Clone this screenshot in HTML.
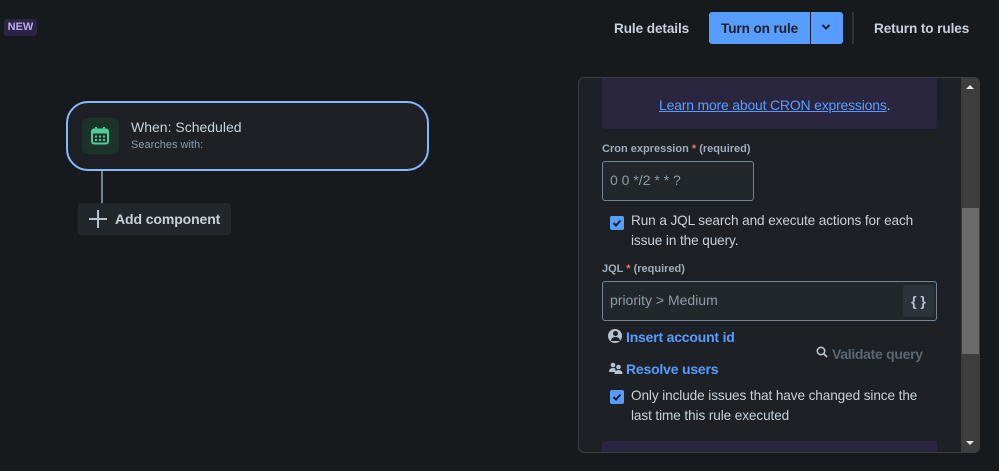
<!DOCTYPE html>
<html><head><style>
*{box-sizing:border-box;margin:0;padding:0}
body{width:999px;height:471px;background:#161a1d;font-family:"Liberation Sans",sans-serif;color:#b6c2cf;position:relative;overflow:hidden;font-size:14px}
.abs{position:absolute}
</style></head><body>
<div class="abs" style="left:4px;top:19px;width:33px;height:17px;background:#2b2442;border-radius:3px;color:#b8acf6;font-weight:bold;font-size:11px;text-align:center;line-height:17px">NEW</div>

<div class="abs" style="left:614px;top:20px;font-size:13.6px;font-weight:bold;color:#c7d1db;line-height:18px;letter-spacing:-0.1px">Rule details</div>
<div class="abs" style="left:709px;top:12px;width:134px;height:32px;background:#579dff;border-radius:3px"></div>
<div class="abs" style="left:810px;top:12px;width:1px;height:32px;background:#1d2125"></div>
<div class="abs" style="left:721px;top:20px;font-size:13.6px;font-weight:bold;color:#1d2125;line-height:18px;letter-spacing:-0.1px">Turn on rule</div>
<svg class="abs" style="left:821px;top:23px" width="10" height="8"><path d="M1.5 2 L5 5.5 L8.5 2" stroke="#1d2125" stroke-width="2" fill="none"/></svg>
<div class="abs" style="left:852px;top:12px;width:2px;height:32px;background:#2c333a"></div>
<div class="abs" style="left:874px;top:20px;font-size:13.6px;font-weight:bold;color:#c7d1db;line-height:18px;letter-spacing:-0.1px">Return to rules</div>

<div class="abs" style="left:66px;top:101px;width:363px;height:70px;border:2px solid #85b8ff;border-radius:22px;background:#1d2125"></div>
<div class="abs" style="left:82px;top:118px;width:37px;height:36px;background:#1c3329;border-radius:6px"></div>
<svg class="abs" style="left:90px;top:126px" width="20" height="20" viewBox="0 0 20 20"><rect x="2" y="3.5" width="16" height="14" rx="2" fill="none" stroke="#4bce97" stroke-width="2"/><rect x="2" y="3.5" width="16" height="4" fill="#4bce97"/><rect x="5" y="1" width="2" height="4" fill="#4bce97"/><rect x="13" y="1" width="2" height="4" fill="#4bce97"/><g fill="#4bce97"><rect x="5" y="9.5" width="2" height="2"/><rect x="9" y="9.5" width="2" height="2"/><rect x="13" y="9.5" width="2" height="2"/><rect x="5" y="13" width="2" height="2"/><rect x="9" y="13" width="2" height="2"/><rect x="13" y="13" width="2" height="2"/></g></svg>
<div class="abs" style="left:131px;top:119px;font-size:14px;color:#c7d1db">When: Scheduled</div>
<div class="abs" style="left:131px;top:139px;font-size:11px;color:#8c9bab">Searches with:</div>
<div class="abs" style="left:101px;top:171px;width:2px;height:33px;background:#738496"></div>
<div class="abs" style="left:78px;top:203px;width:153px;height:32px;background:#22272b;border-radius:3px"></div>
<div class="abs" style="left:89px;top:218px;width:18px;height:2px;background:#b6c2cf"></div>
<div class="abs" style="left:97px;top:210px;width:2px;height:18px;background:#b6c2cf"></div>
<div class="abs" style="left:115px;top:211px;font-size:14px;font-weight:bold;color:#c7d1db;letter-spacing:-0.1px">Add component</div>

<div class="abs" style="left:578px;top:77px;width:402px;height:376px;background:#1d2125;border:1px solid #3a3f45;border-radius:6px;overflow:hidden">
 <div class="abs" style="left:23px;top:-2px;width:335px;height:53px;background:#2b2640;border-radius:3px"></div>
 <div class="abs" style="left:80px;top:19px;font-size:14px;color:#b6c2cf;letter-spacing:-0.2px"><span style="color:#579dff;text-decoration:underline">Learn more about CRON expressions</span>.</div>
 <div class="abs" style="left:23px;top:65px;font-size:11px;font-weight:bold;color:#9fadbc">Cron expression <span style="color:#f87168">*</span> (required)</div>
 <div class="abs" style="left:23px;top:83px;width:152px;height:40px;background:#22272b;border:1px solid #738496;border-radius:3px;padding:10px 7px;font-size:14px;color:#8c9bab">0 0 */2 * * ?</div>
 <div class="abs" style="left:31px;top:138px;width:14px;height:14px;background:#579dff;border-radius:2px"></div>
 <svg class="abs" style="left:31px;top:138px" width="14" height="14"><path d="M3.5 7 L6 9.5 L10.5 4.5" stroke="#1d2125" stroke-width="2" fill="none"/></svg>
 <div class="abs" style="left:52px;top:133px;width:300px;font-size:13.6px;line-height:20px;color:#c7d1db;letter-spacing:-0.1px">Run a JQL search and execute actions for each issue in the query.</div>
 <div class="abs" style="left:23px;top:185px;font-size:11px;font-weight:bold;color:#9fadbc">JQL <span style="color:#f87168">*</span> (required)</div>
 <div class="abs" style="left:23px;top:203px;width:335px;height:40px;background:#22272b;border:1px solid #738496;border-radius:3px;padding:10px 7px;font-size:14px;color:#8c9bab">priority &gt; Medium</div>
 <div class="abs" style="left:324px;top:207px;width:31px;height:32px;background:#2c333a;border-radius:3px;text-align:center;line-height:32px;font-weight:bold;color:#b6c2cf;font-size:14px">{ }</div>
 <div class="abs" style="left:29px;top:251px;width:14px;height:14px;border-radius:50%;background:#b6c2cf"></div>
 <div class="abs" style="left:33.5px;top:253px;width:5px;height:5px;border-radius:50%;background:#1d2125"></div>
 <div class="abs" style="left:31.5px;top:259px;width:9px;height:4px;border-radius:4px 4px 0 0;background:#1d2125"></div>
 <div class="abs" style="left:47px;top:251px;font-size:14px;font-weight:bold;color:#579dff;letter-spacing:-0.2px">Insert account id</div>
 <svg class="abs" style="left:237px;top:268px" width="12" height="12"><circle cx="5" cy="5" r="3.7" stroke="#b6c2cf" stroke-width="1.6" fill="none"/><path d="M7.8 7.8 L11 11" stroke="#b6c2cf" stroke-width="1.8"/></svg>
 <div class="abs" style="left:253px;top:268px;font-size:14px;font-weight:bold;color:#596773;letter-spacing:-0.3px">Validate query</div>
 <svg class="abs" style="left:30px;top:284px" width="14" height="12"><circle cx="4" cy="3" r="2.3" fill="#b6c2cf"/><circle cx="9.5" cy="5" r="2.3" fill="#b6c2cf"/><path d="M0 10 Q0 6 4 6 Q6 6 6.5 7 L6.5 10Z" fill="#b6c2cf"/><path d="M5.5 12 Q5.5 8 9.5 8 Q13.5 8 13.5 12Z" fill="#b6c2cf"/></svg>
 <div class="abs" style="left:47px;top:283px;font-size:14px;font-weight:bold;color:#579dff;letter-spacing:-0.2px">Resolve users</div>
 <div class="abs" style="left:31px;top:312px;width:14px;height:14px;background:#579dff;border-radius:2px"></div>
 <svg class="abs" style="left:31px;top:312px" width="14" height="14"><path d="M3.5 7 L6 9.5 L10.5 4.5" stroke="#1d2125" stroke-width="2" fill="none"/></svg>
 <div class="abs" style="left:52px;top:308px;width:300px;font-size:13.6px;line-height:20px;color:#c7d1db;letter-spacing:-0.1px">Only include issues that have changed since the last time this rule executed</div>
 <div class="abs" style="left:23px;top:363px;width:335px;height:20px;background:#2b2640;border-radius:3px"></div>
 <div class="abs" style="left:382px;top:0;width:19px;height:376px;background:#3d3d3d"></div>
 <div class="abs" style="left:383px;top:130px;width:18px;height:146px;background:#6b6b6b"></div>
 <svg class="abs" style="left:386px;top:6px" width="10" height="6"><path d="M1 5 L5 1 L9 5Z" fill="#e6e6e6"/></svg>
 <svg class="abs" style="left:386px;top:362px" width="10" height="6"><path d="M1 1 L5 5 L9 1Z" fill="#e6e6e6"/></svg>
</div>
</body></html>
